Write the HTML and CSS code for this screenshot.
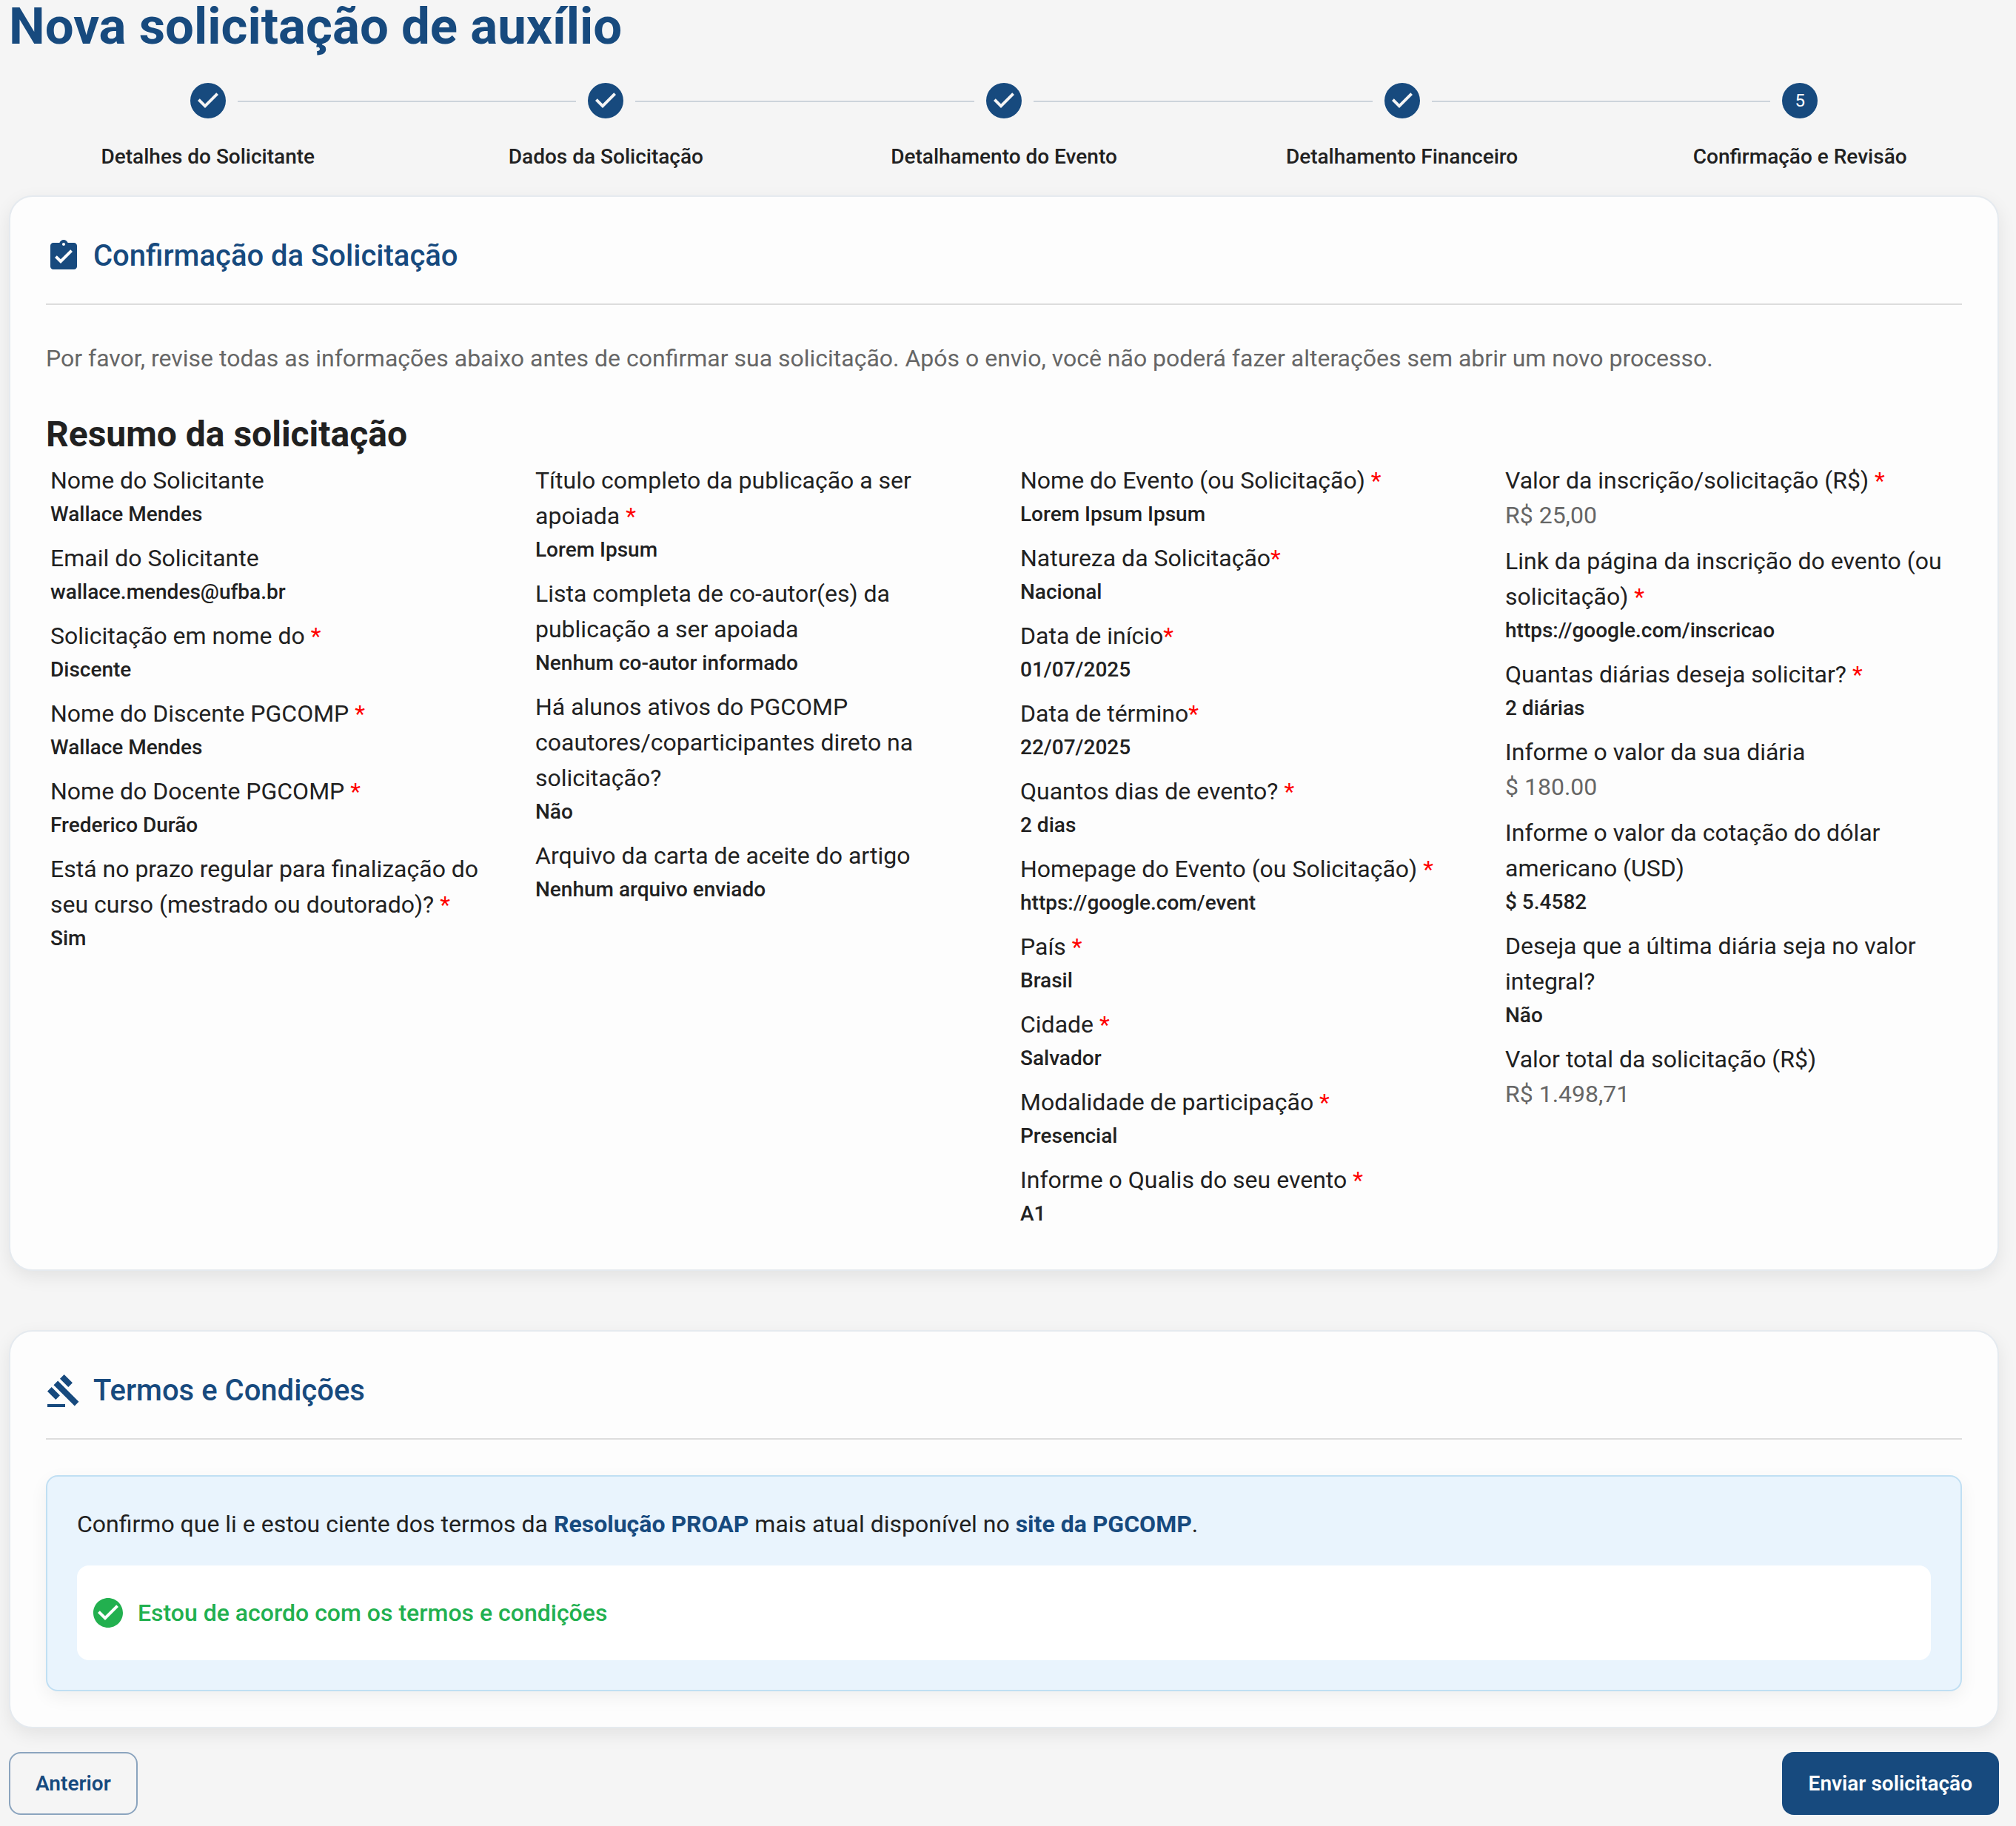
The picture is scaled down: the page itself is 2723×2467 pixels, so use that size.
FILE: index.html
```html
<!DOCTYPE html>
<html lang="pt-BR">
<head>
<meta charset="utf-8">
<meta name="viewport" content="width=device-width, initial-scale=1">
<title>Nova solicitação de auxílio</title>
<link rel="stylesheet" href="styles.css">
</head>
<body>
<svg class="sprite" aria-hidden="true">
  <symbol id="step-done" viewBox="0 0 24 24"><path d="M12 0a12 12 0 1 0 0 24 12 12 0 0 0 0-24zm-2 17l-5-5 1.4-1.4 3.6 3.6 7.6-7.6L19 8l-9 9z"/></symbol>
</svg>
<main class="page">
  <h1 class="page-title">Nova solicitação de auxílio</h1>

  <ol class="stepper">
    <li class="step"><svg class="step-icon"><use href="#step-done"/></svg><span class="step-label">Detalhes do Solicitante</span></li>
    <li class="step"><svg class="step-icon"><use href="#step-done"/></svg><span class="step-label">Dados da Solicitação</span></li>
    <li class="step"><svg class="step-icon"><use href="#step-done"/></svg><span class="step-label">Detalhamento do Evento</span></li>
    <li class="step"><svg class="step-icon"><use href="#step-done"/></svg><span class="step-label">Detalhamento Financeiro</span></li>
    <li class="step" aria-current="step"><span class="step-number">5</span><span class="step-label">Confirmação e Revisão</span></li>
  </ol>

  <section class="card">
    <header class="card-header">
      <svg class="icon" viewBox="0 0 24 24" aria-hidden="true"><path d="M19 3h-4.18C14.4 1.84 13.3 1 12 1c-1.3 0-2.4.84-2.82 2H5c-1.1 0-2 .9-2 2v14c0 1.100.9 2 2 2h14c1.100 0 2-.9 2-2V5c0-1.100-.9-2-2-2zm-7 0c.55 0 1 .45 1 1s-.45 1-1 1-1-.45-1-1 .45-1 1-1zm-2 14l-4-4 1.410-1.410L10 14.170l6.590-6.590L18 9l-8 8z"/></svg>
      <h2 class="card-title">Confirmação da Solicitação</h2>
    </header>
    <p class="intro">Por favor, revise todas as informações abaixo antes de confirmar sua solicitação. Após o envio, você não poderá fazer alterações sem abrir um novo processo.</p>
    <h3 class="summary-title">Resumo da solicitação</h3>
    <div class="summary">
      <dl class="fields">
        <div><dt>Nome do Solicitante</dt><dd>Wallace Mendes</dd></div>
        <div><dt>Email do Solicitante</dt><dd>wallace.mendes@ufba.br</dd></div>
        <div><dt>Solicitação em nome do <span class="req">*</span></dt><dd>Discente</dd></div>
        <div><dt>Nome do Discente PGCOMP <span class="req">*</span></dt><dd>Wallace Mendes</dd></div>
        <div><dt>Nome do Docente PGCOMP <span class="req">*</span></dt><dd>Frederico Durão</dd></div>
        <div><dt>Está no prazo regular para finalização do seu curso (mestrado ou doutorado)? <span class="req">*</span></dt><dd>Sim</dd></div>
      </dl>
      <dl class="fields">
        <div><dt>Título completo da publicação a ser apoiada <span class="req">*</span></dt><dd>Lorem Ipsum</dd></div>
        <div><dt>Lista completa de co-autor(es) da publicação a ser apoiada</dt><dd>Nenhum co-autor informado</dd></div>
        <div><dt>Há alunos ativos do PGCOMP coautores/coparticipantes direto na solicitação?</dt><dd>Não</dd></div>
        <div><dt>Arquivo da carta de aceite do artigo</dt><dd>Nenhum arquivo enviado</dd></div>
      </dl>
      <dl class="fields">
        <div><dt>Nome do Evento (ou Solicitação) <span class="req">*</span></dt><dd>Lorem Ipsum Ipsum</dd></div>
        <div><dt>Natureza da Solicitação<span class="req">*</span></dt><dd>Nacional</dd></div>
        <div><dt>Data de início<span class="req">*</span></dt><dd>01/07/2025</dd></div>
        <div><dt>Data de término<span class="req">*</span></dt><dd>22/07/2025</dd></div>
        <div><dt>Quantos dias de evento? <span class="req">*</span></dt><dd>2 dias</dd></div>
        <div><dt>Homepage do Evento (ou Solicitação) <span class="req">*</span></dt><dd>https://google.com/event</dd></div>
        <div><dt>País <span class="req">*</span></dt><dd>Brasil</dd></div>
        <div><dt>Cidade <span class="req">*</span></dt><dd>Salvador</dd></div>
        <div><dt>Modalidade de participação <span class="req">*</span></dt><dd>Presencial</dd></div>
        <div><dt>Informe o Qualis do seu evento <span class="req">*</span></dt><dd>A1</dd></div>
      </dl>
      <dl class="fields">
        <div><dt>Valor da inscrição/solicitação (R$) <span class="req">*</span></dt><dd class="amount">R$ 25,00</dd></div>
        <div><dt>Link da página da inscrição do evento (ou solicitação) <span class="req">*</span></dt><dd>https://google.com/inscricao</dd></div>
        <div><dt>Quantas diárias deseja solicitar? <span class="req">*</span></dt><dd>2 diárias</dd></div>
        <div><dt>Informe o valor da sua diária</dt><dd class="amount">$ 180.00</dd></div>
        <div><dt>Informe o valor da cotação do dólar americano (USD)</dt><dd>$ 5.4582</dd></div>
        <div><dt>Deseja que a última diária seja no valor integral?</dt><dd>Não</dd></div>
        <div><dt>Valor total da solicitação (R$)</dt><dd class="amount">R$ 1.498,71</dd></div>
      </dl>
    </div>
  </section>

  <section class="card card-terms">
    <header class="card-header">
      <svg class="icon" viewBox="0 0 24 24" aria-hidden="true"><path d="M1 21h12v2H1zM5.245 8.07l2.83-2.827 14.14 14.142-2.828 2.828zM12.317 1l5.657 5.656-2.83 2.83-5.654-5.66zM3.825 9.485l5.657 5.657-2.828 2.828-5.657-5.657z"/></svg>
      <h2 class="card-title">Termos e Condições</h2>
    </header>
    <div class="notice">
      <p class="notice-text">Confirmo que li e estou ciente dos termos da <a href="#resolucao">Resolução PROAP</a> mais atual disponível no <a href="#site">site da PGCOMP</a>.</p>
      <label class="agree">
        <span class="check">
          <input class="check-input" type="checkbox" checked>
          <svg class="check-icon" viewBox="0 0 24 24" aria-hidden="true"><path d="M12 2C6.48 2 2 6.48 2 12s4.48 10 10 10 10-4.48 10-10S17.52 2 12 2zm-2 15l-5-5 1.410-1.410L10 14.170l7.590-7.590L19 8l-9 9z"/></svg>
        </span>
        <span>Estou de acordo com os termos e condições</span>
      </label>
    </div>
  </section>

  <nav class="actions">
    <button class="button button-outline" type="button">Anterior</button>
    <button class="button button-primary" type="submit">Enviar solicitação</button>
  </nav>
</main>
</body>
</html>
```
FILE: styles.css
```css
:root {
  --primary: #174a7e;
  --text: #212121;
  --muted: #666;
  --success: #22b04f;
}

* { box-sizing: border-box; }

body {
  margin: 0;
  background: #f5f5f5;
  color: var(--text);
  font: 400 32px/48px Roboto, "Liberation Sans", sans-serif;
}

h1, h2, h3, p, dl, dd, ol { margin: 0; padding: 0; }

.sprite { display: none; }

.page { padding: 0 23px 15px 12px; }

.page-title {
  color: var(--primary);
  font-size: 69px;
  font-weight: 700;
  line-height: 72px;
}

.stepper {
  display: flex;
  margin-top: 40px;
  list-style: none;
}

.step {
  position: relative;
  flex: 1;
  display: flex;
  flex-direction: column;
  align-items: center;
  gap: 32px;
}

/* Connector between a step and the one before it */
.step + .step::before {
  content: "";
  position: absolute;
  top: 24px;
  left: calc(-50% + 40px);
  right: calc(50% + 40px);
  height: 2px;
  background: #cdd4db;
}

.step-icon { width: 48px; height: 48px; fill: var(--primary); }

.step-number {
  width: 48px;
  height: 48px;
  border-radius: 50%;
  background: var(--primary);
  color: #fff;
  font-size: 24px;
  text-align: center;
}

.step-label { font-size: 28px; font-weight: 500; line-height: 40px; }

.card {
  margin-top: 32px;
  padding: 48px;
  border: 2px solid #e5eaef;
  border-radius: 32px;
  background: #fdfdfd;
  box-shadow: 0 8px 24px rgba(0, 0, 0, .08);
}

.card-terms { margin-top: 80px; }

.card-header {
  display: flex;
  align-items: center;
  gap: 16px;
  margin-bottom: 48px;
  padding-bottom: 32px;
  border-bottom: 2px solid #ddd;
  color: var(--primary);
}

.icon { width: 48px; height: 48px; fill: currentColor; }

.card-title { font-size: 40px; font-weight: 500; line-height: 64px; }

.intro { margin-bottom: 48px; color: var(--muted); }

.summary-title { font-size: 48px; font-weight: 700; line-height: 62px; }

.summary {
  display: grid;
  grid-template-columns: repeat(4, minmax(0, 1fr));
  gap: 32px;
  padding: 7px 0 6px;
}

.fields {
  display: flex;
  flex-direction: column;
  gap: 14px;
  padding: 0 6px;
}

.fields dd { font-size: 28px; font-weight: 500; line-height: 43px; }

.fields .amount {
  color: var(--muted);
  font-size: 32px;
  font-weight: 400;
  line-height: 47px;
}

.req { color: #f00; }

.notice {
  padding: 40px;
  border: 2px solid #c0dff3;
  border-radius: 16px;
  background: #e9f4fd;
  box-shadow: 0 8px 24px rgba(0, 0, 0, .06);
}

.notice-text { margin-bottom: 32px; }

.notice-text a { color: var(--primary); font-weight: 700; text-decoration: none; }

.agree {
  display: flex;
  align-items: center;
  gap: 16px;
  padding: 40px 18px;
  border-radius: 16px;
  background: #fff;
  color: var(--success);
  font-weight: 500;
}

.check { display: grid; }

.check-input,
.check-icon {
  grid-area: 1 / 1;
  width: 48px;
  height: 48px;
  margin: 0;
}

.check-input {
  appearance: none;
  border: 4px solid var(--success);
  border-radius: 50%;
}

.check-input:checked { border-color: transparent; }

.check-icon { visibility: hidden; fill: currentColor; pointer-events: none; }

.check-input:checked + .check-icon { visibility: visible; }

.actions {
  display: flex;
  justify-content: space-between;
  margin-top: 32px;
}

.button {
  padding: 16px 36px;
  border: 0;
  border-radius: 16px;
  font: 600 28px/53px Roboto, "Liberation Sans", sans-serif;
}

.button-outline {
  padding: 14px 34px;
  border: 2px solid #8ba4be;
  background: transparent;
  color: var(--primary);
}

.button-primary { background: var(--primary); color: #fff; }
```
